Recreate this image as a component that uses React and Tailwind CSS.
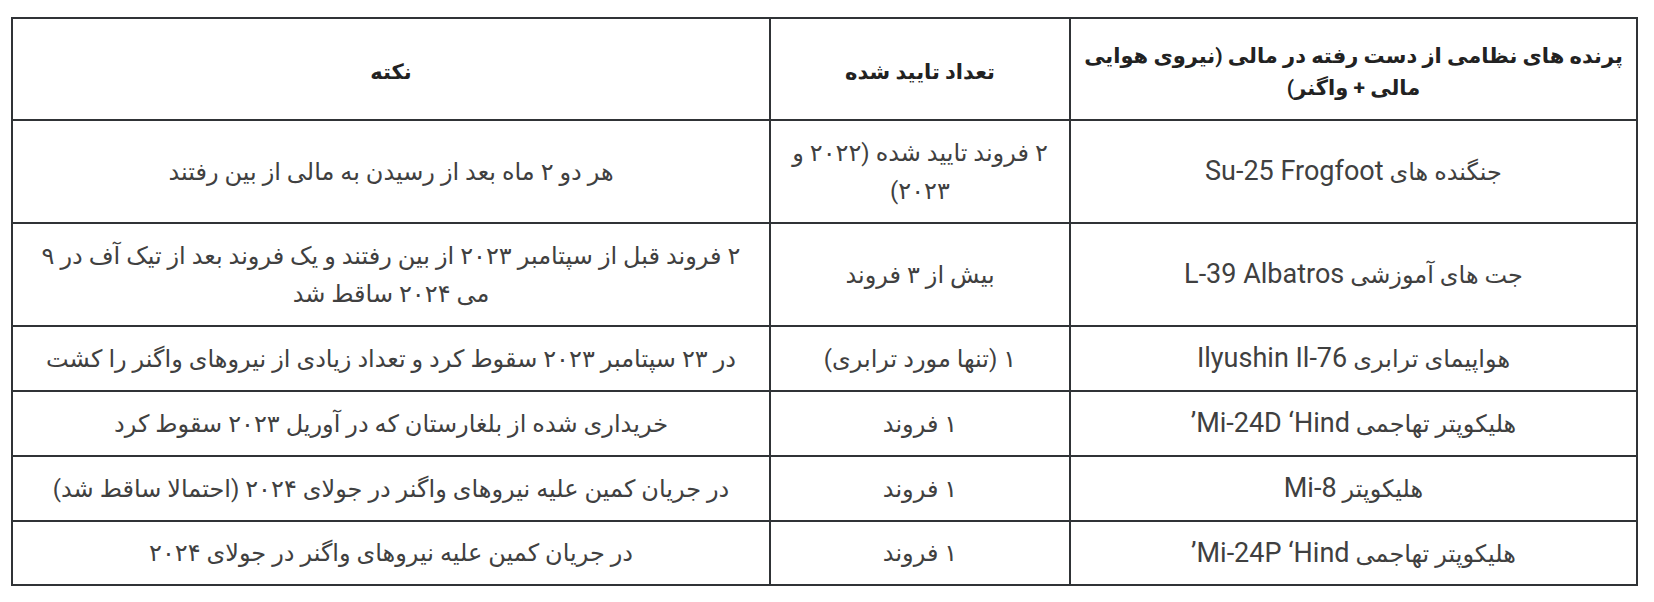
import React from "react";

const Lat = ({ children }) => <span className="text-[27px]">{children}</span>;

const rows = [
  {
    name: (
      <>
        جنگنده های <Lat>Su-25 Frogfoot</Lat>
      </>
    ),
    count: (
      <>
        ۲ فروند تایید شده (۲۰۲۲ و
        <br />
        ۲۰۲۳)
      </>
    ),
    note: "هر دو ۲ ماه بعد از رسیدن به مالی از بین رفتند",
    h: "h-[103px]",
  },
  {
    name: (
      <>
        جت های آموزشی <Lat>L-39 Albatros</Lat>
      </>
    ),
    count: "بیش از ۳ فروند",
    note: (
      <>
        ۲ فروند قبل از سپتامبر ۲۰۲۳ از بین رفتند و یک فروند بعد از تیک آف در ۹
        <br />
        می ۲۰۲۴ ساقط شد
      </>
    ),
    h: "h-[103px]",
  },
  {
    name: (
      <>
        هواپیمای ترابری <Lat>Ilyushin Il-76</Lat>
      </>
    ),
    count: "۱ (تنها مورد ترابری)",
    note: "در ۲۳ سپتامبر ۲۰۲۳ سقوط کرد و تعداد زیادی از نیروهای واگنر را کشت",
    h: "h-[65px]",
  },
  {
    name: (
      <>
        هلیکوپتر تهاجمی <Lat>Mi-24D ‘Hind’</Lat>
      </>
    ),
    count: "۱ فروند",
    note: "خریداری شده از بلغارستان که در آوریل ۲۰۲۳ سقوط کرد",
    h: "h-[65px]",
  },
  {
    name: (
      <>
        هلیکوپتر <Lat>Mi-8</Lat>
      </>
    ),
    count: "۱ فروند",
    note: "در جریان کمین علیه نیروهای واگنر در جولای ۲۰۲۴ (احتمالا ساقط شد)",
    h: "h-[65px]",
  },
  {
    name: (
      <>
        هلیکوپتر تهاجمی <Lat>Mi-24P ‘Hind’</Lat>
      </>
    ),
    count: "۱ فروند",
    note: "در جریان کمین علیه نیروهای واگنر در جولای ۲۰۲۴",
    h: "h-[64px]",
  },
];

export default function App() {
  return (
    <div className="min-h-screen bg-white pl-[11px] pt-[17px] font-['Roboto','DejaVu_Sans',sans-serif]">
      <table dir="rtl" className="w-[1627px] table-fixed border-collapse text-center">
        <colgroup>
          <col className="w-[567px]" />
          <col className="w-[300px]" />
          <col />
        </colgroup>
        <thead>
          <tr className="h-[102px]">
            <th className="border-2 border-[#303336] px-2 pt-[6px] text-[21px] font-bold leading-[32px] text-[#222]">
              پرنده های نظامی از دست رفته در مالی (نیروی هوایی
              <br />
              مالی + واگنر)
            </th>
            <th className="border-2 border-[#303336] px-3 pt-[6px] text-[21px] font-bold leading-[32px] text-[#222]">
              تعداد تایید شده
            </th>
            <th className="border-2 border-[#303336] px-3 pt-[6px] text-[21px] font-bold leading-[32px] text-[#222]">
              نکته
            </th>
          </tr>
        </thead>
        <tbody>
          {rows.map((r, i) => (
            <tr key={i} className={r.h}>
              <td className="border-2 border-[#303336] px-3 text-[24px] leading-[38px] text-[#404040]">{r.name}</td>
              <td className="border-2 border-[#303336] px-3 text-[24px] leading-[38px] text-[#404040]">{r.count}</td>
              <td className="border-2 border-[#303336] px-3 text-[24px] leading-[38px] text-[#404040]">{r.note}</td>
            </tr>
          ))}
        </tbody>
      </table>
    </div>
  );
}
